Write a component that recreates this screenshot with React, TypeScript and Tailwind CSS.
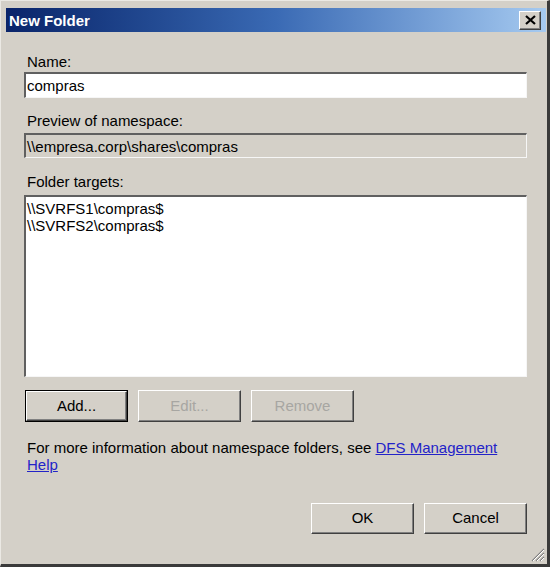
import React from 'react';

const font = { fontFamily: '"Liberation Sans", Arial, sans-serif' };

const Raised: React.FC<{ label: string; disabled?: boolean; isDefault?: boolean; className?: string }> = ({
  label,
  disabled,
  isDefault,
  className = '',
}) => (
  <div className={`${isDefault ? 'border border-black' : ''} ${className}`}>
    <button
      className={`w-full h-full bg-[#d4d0c8] border-t border-l border-t-white border-l-white border-b border-r border-b-[#404040] border-r-[#404040] shadow-[inset_-1px_-1px_0_#808080] text-[15px] ${
        disabled ? 'text-[#a7a6a2]' : 'text-black'
      }`}
    >
      {label}
    </button>
  </div>
);

const sunken =
  'border-t-2 border-l-2 border-t-[#606060] border-l-[#606060] border-b border-r border-b-[#f6f6f6] border-r-[#f6f6f6]';

export default function App() {
  return (
    <div
      className="w-[550px] h-[567px] bg-[#d4d0c8] border-t-[1px] border-l-[1px] border-t-[#ebe9e4] border-l-[#ebe9e4] border-r-[3px] border-b-[3px] border-r-[#3a3a3a] border-b-[#3a3a3a] flex flex-col overflow-hidden"
      style={font}
    >
      <div className="pt-[7px] pl-[5px] pr-[1px]">
        {/* Title bar */}
        <div className="h-[24px] bg-linear-to-r from-[#0a246a] via-[#3a6ab4] to-[#a6caf0] flex items-center justify-between pl-[3px] pr-[5px]">
          <span className="text-white font-bold text-[15px] leading-none">New Folder</span>
          <div className="w-[22px] h-[19px] bg-[#d4d0c8] border-t border-l border-t-white border-l-white border-b border-r border-b-[#404040] border-r-[#404040] shadow-[inset_-1px_-1px_0_#808080] flex items-center justify-center">
            <svg width="11" height="10" viewBox="0 0 11 10">
              <path d="M1 1 L10 9 M10 1 L1 9" stroke="black" strokeWidth="2.2" />
            </svg>
          </div>
        </div>
      </div>

      <div className="flex flex-col pl-[23px] pr-[20px] text-[15px] text-black">
        <div className="mt-[21px] h-[18px] leading-[18px] pl-[3px]">Name:</div>
        <div className={`mt-[1px] h-[26px] bg-white ${sunken} flex items-center pl-[1px] leading-none`}>compras</div>

        <div className="mt-[14px] h-[18px] leading-[18px] pl-[3px]">Preview of namespace:</div>
        <div className={`mt-[3px] h-[25px] bg-[#d4d0c8] ${sunken} flex items-center pl-[1px] leading-none`}>
          \\empresa.corp\shares\compras
        </div>

        <div className="mt-[15px] h-[18px] leading-[18px] pl-[3px]">Folder targets:</div>
        <div className={`mt-[4px] h-[182px] bg-white ${sunken} pl-[1px] pt-[3px]`}>
          <div className="leading-[17px]">\\SVRFS1\compras$</div>
          <div className="leading-[17px]">\\SVRFS2\compras$</div>
        </div>

        <div className="mt-[13px] flex gap-[10px] pl-[1px]">
          <Raised label="Add..." isDefault className="w-[103px] h-[32px]" />
          <Raised label="Edit..." disabled className="w-[103px] h-[32px]" />
          <Raised label="Remove" disabled className="w-[103px] h-[32px]" />
        </div>

        <div className="mt-[17px] leading-[17px] pl-[3px]">
          <div>
            For more information about namespace folders, see{' '}
            <a className="text-[#2323c8] underline">DFS Management</a>
          </div>
          <div>
            <a className="text-[#2323c8] underline">Help</a>
          </div>
        </div>

        <div className="mt-[30px] flex justify-end gap-[10px]">
          <Raised label="OK" className="w-[103px] h-[31px]" />
          <Raised label="Cancel" className="w-[103px] h-[31px]" />
        </div>
      </div>

      <div className="flex-1 flex justify-end items-end pr-[2px] pb-[2px]">
        <svg width="16" height="16" viewBox="0 0 16 16">
          <path d="M15 3 L3 15 M15 7 L7 15 M15 11 L11 15" stroke="#808080" strokeWidth="1.2" />
          <path d="M15 4 L4 15 M15 8 L8 15 M15 12 L12 15" stroke="#ffffff" strokeWidth="1" />
        </svg>
      </div>
    </div>
  );
}
